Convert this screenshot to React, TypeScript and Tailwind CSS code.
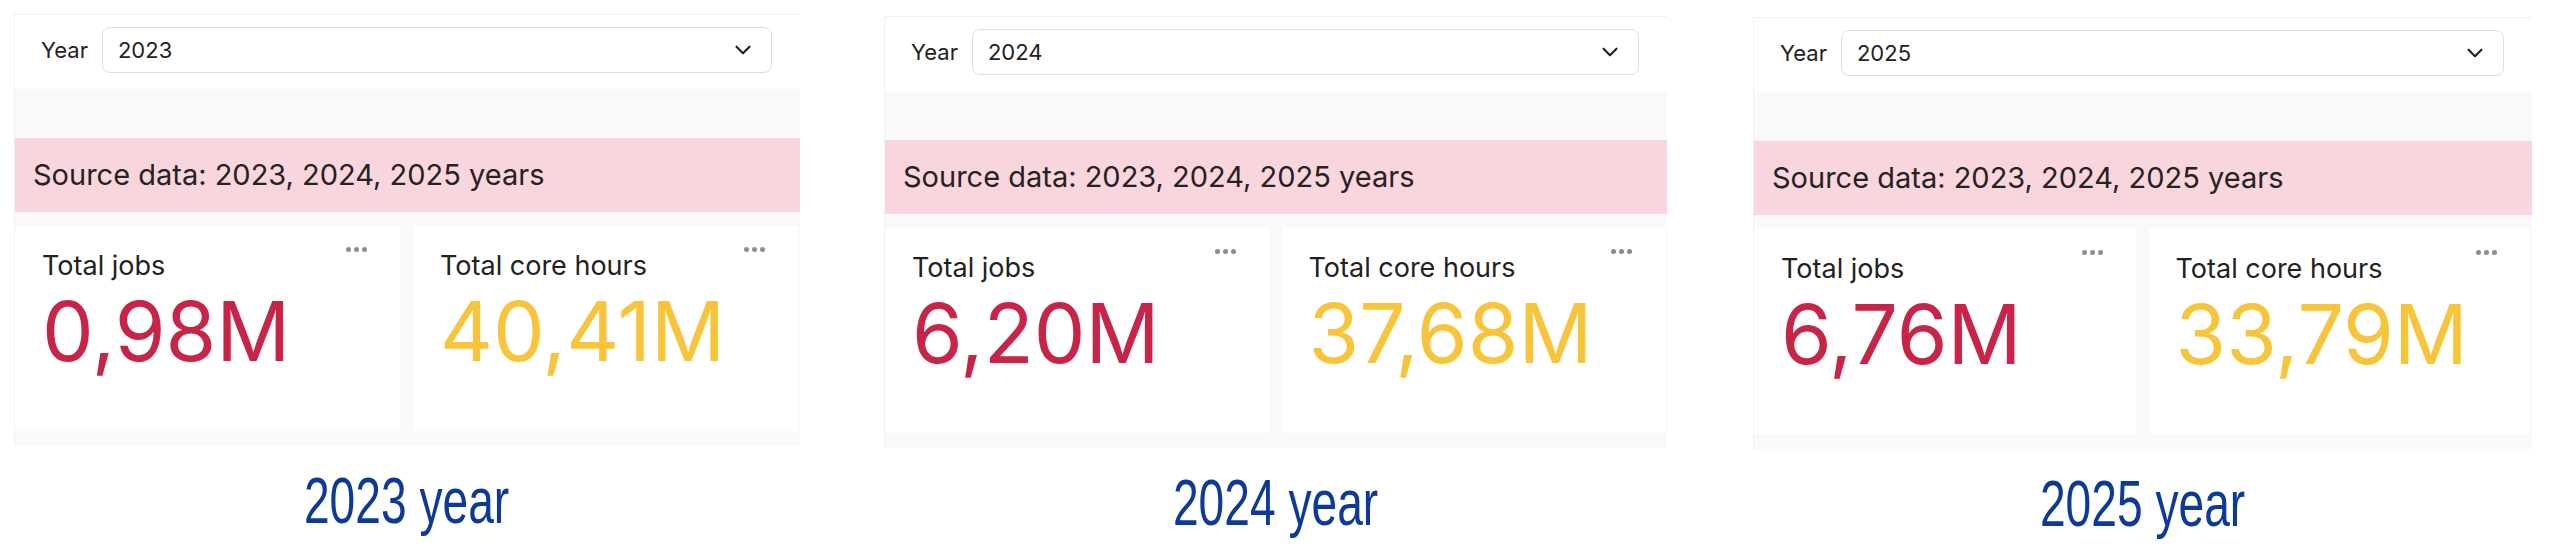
import { ChevronDown } from 'lucide-react';

type PanelProps = {
  year: string;
  jobs: string;
  hours: string;
  className: string;
};

function Dots() {
  return (
    <div className="absolute top-[21px] right-[33px] flex gap-[3px]">
      <span className="w-[5px] h-[5px] rounded-full bg-[#8c8c8c]" />
      <span className="w-[5px] h-[5px] rounded-full bg-[#8c8c8c]" />
      <span className="w-[5px] h-[5px] rounded-full bg-[#8c8c8c]" />
    </div>
  );
}

function StatCard({ label, value, color }: { label: string; value: string; color: string }) {
  return (
    <div className="relative bg-white h-[205px] pl-[27px] pt-[24px]">
      <Dots />
      <div className="text-[27px] leading-[32px] text-[#222]">{label}</div>
      <div className={`text-[82px] leading-[96px] mt-[2px] ${color}`}>{value}</div>
    </div>
  );
}

function Panel({ year, jobs, hours, className }: PanelProps) {
  return (
    <div className={`flex flex-col items-stretch ${className}`}>
      <div className="bg-[#f9f9f9] border-t border-l border-[#f1f1f1] pb-[15px]">
        {/* year picker */}
        <div className="bg-white flex items-center h-[74px] pl-[26px] pr-[28px] pb-[4px]">
          <span className="text-[22px] text-[#222] mr-[14px]">Year</span>
          <div className="flex-1 h-[46px] border border-[#dedede] rounded-[8px] flex items-center justify-between pl-[15px] pr-[15px]">
            <span className="text-[22px] text-[#222]">{year}</span>
            <ChevronDown className="w-[26px] h-[26px] text-[#222]" strokeWidth={2} />
          </div>
        </div>
        <div className="h-[49px]" />
        <div className="bg-[#f9d6de] h-[74px] flex items-center pl-[18px]">
          <span className="text-[29px] text-[#262222]">Source data: 2023, 2024, 2025 years</span>
        </div>
        <div className="grid grid-cols-2 gap-[13px] mt-[14px] pr-[2px]">
          <StatCard label="Total jobs" value={jobs} color="text-[#c72447]" />
          <StatCard label="Total core hours" value={hours} color="text-[#f8c43a]" />
        </div>
      </div>
      <div className="flex justify-center mt-[22px]">
        <div className="font-['Liberation_Sans',Arial,sans-serif] text-[65px] leading-none text-[#0d3a98] scale-x-[0.71]">
          {year} year
        </div>
      </div>
    </div>
  );
}

export default function App() {
  return (
    <div className="w-[2560px] h-[555px] bg-white overflow-hidden font-['Inter',sans-serif] flex items-start pl-[14px]">
      <Panel year="2023" jobs="0,98M" hours="40,41M" className="w-[786px] mt-[14px]" />
      <Panel year="2024" jobs="6,20M" hours="37,68M" className="w-[783px] mt-[16px] ml-[84px]" />
      <Panel year="2025" jobs="6,76M" hours="33,79M" className="w-[779px] mt-[17px] ml-[86px]" />
    </div>
  );
}
